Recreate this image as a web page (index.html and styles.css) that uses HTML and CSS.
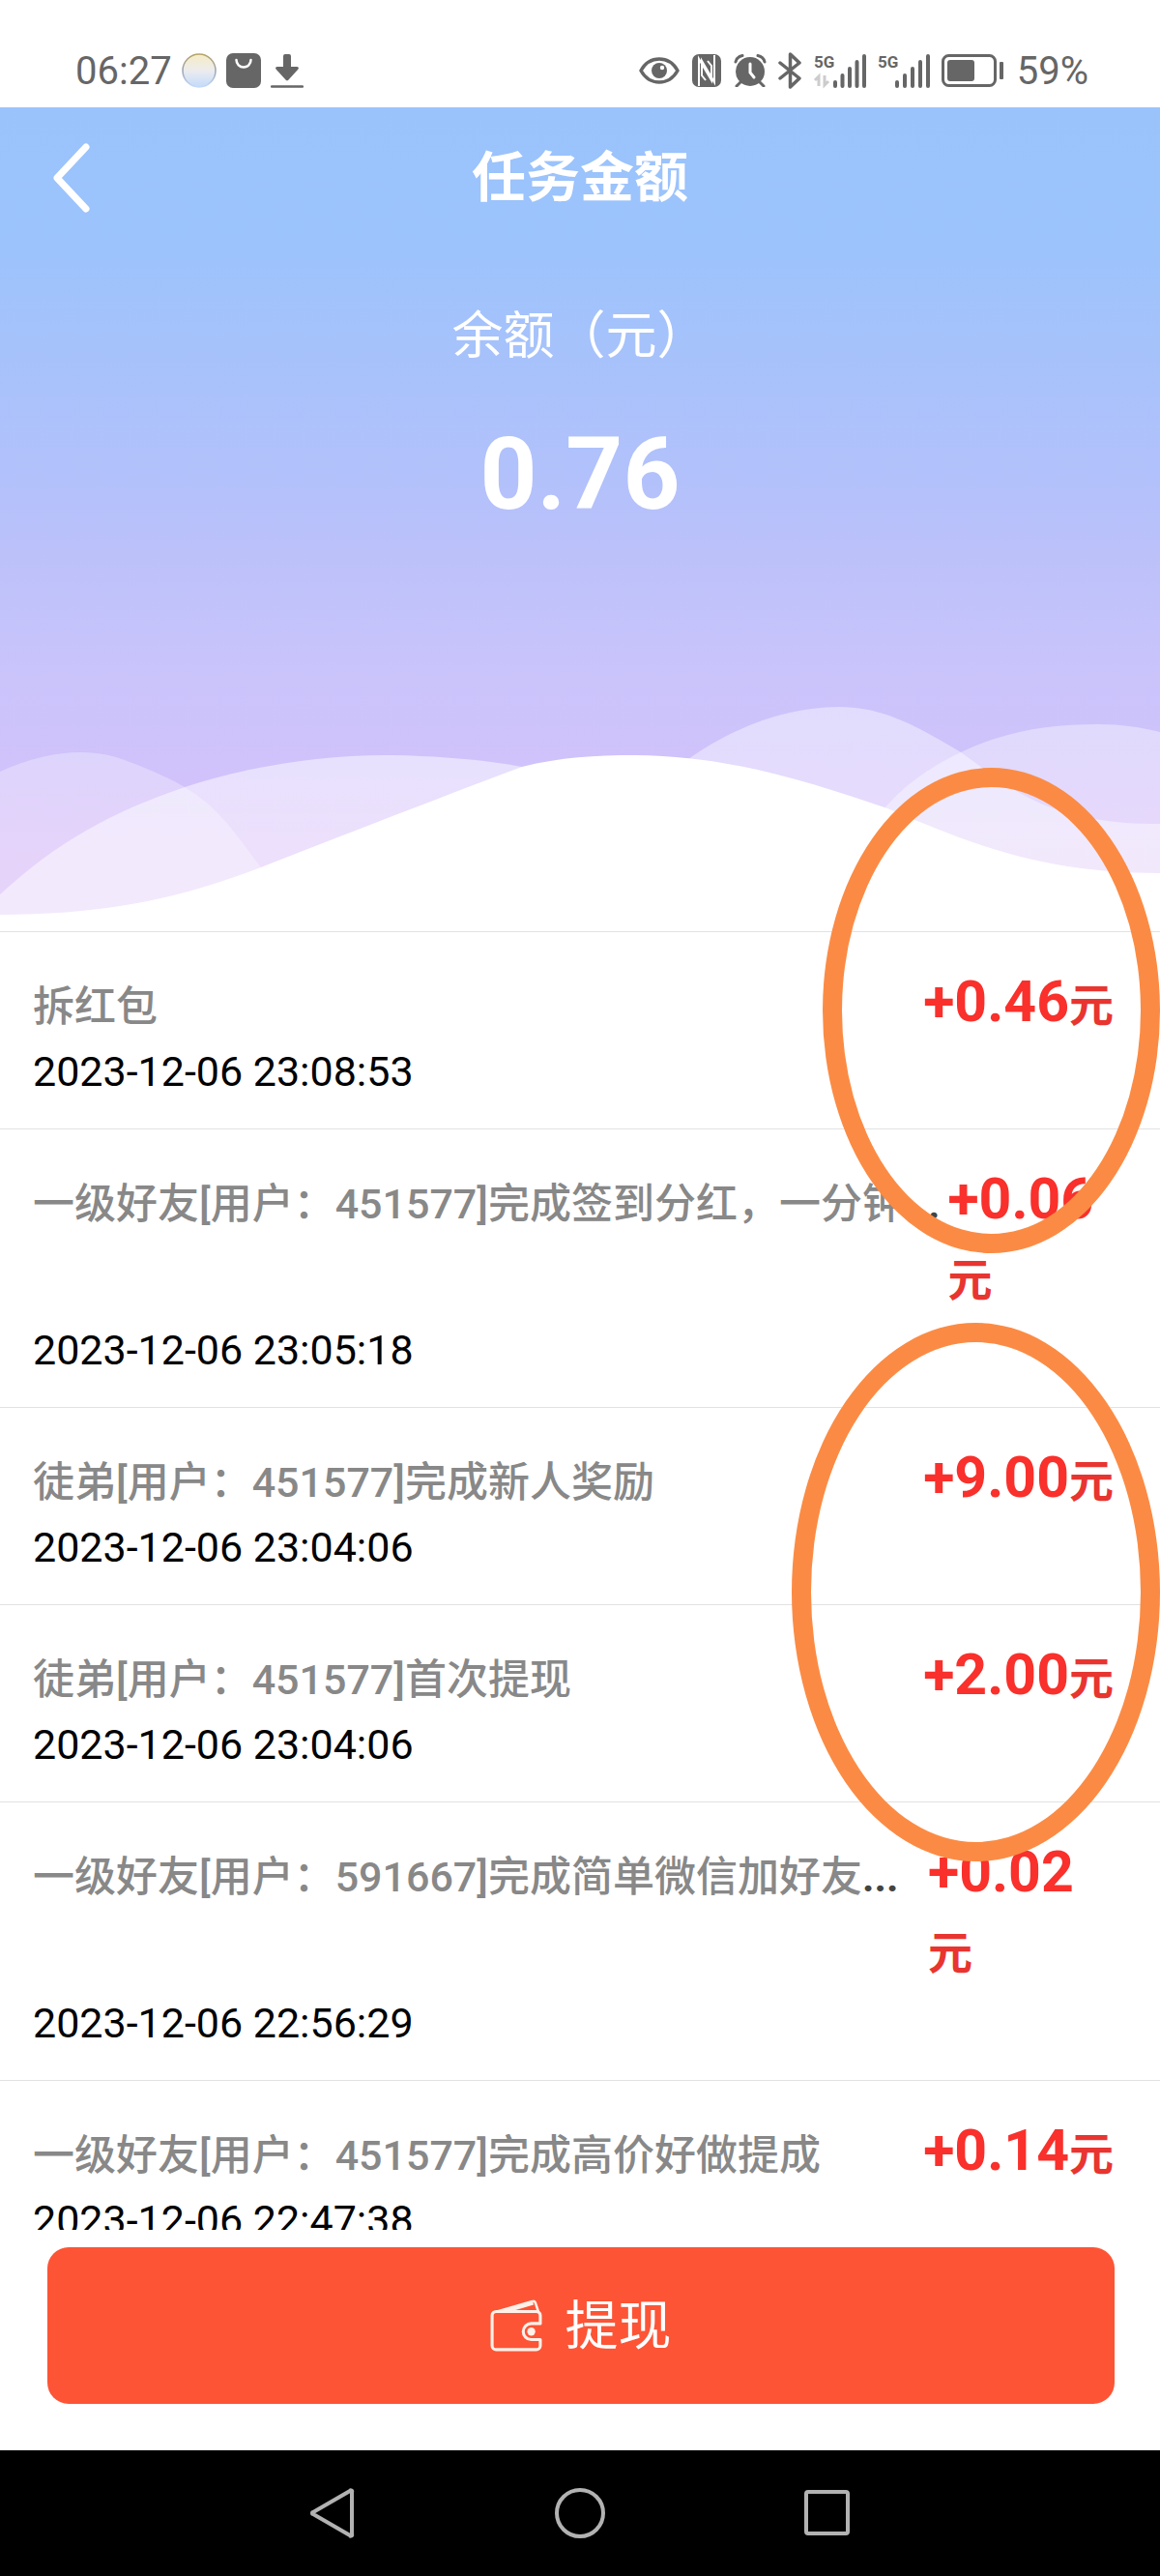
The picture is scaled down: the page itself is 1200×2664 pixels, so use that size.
FILE: index.html
```html
<!DOCTYPE html>
<html lang="zh-CN">
<head>
    <meta charset="UTF-8">
    <meta name="viewport" content="width=device-width, initial-scale=1.0">
    <title>任务金额</title>
    <link rel="stylesheet" href="styles.css">
</head>
<body>

<div class="status-bar">
    <div class="status-left">
        <span class="status-text">06:27</span>
        <svg width="36" height="36" viewBox="0 0 36 36">
            <defs>
                <linearGradient id="ball" x1="0" y1="0" x2="0" y2="1">
                    <stop offset="0" stop-color="#f6ecc4"/>
                    <stop offset="0.5" stop-color="#ececee"/>
                    <stop offset="1" stop-color="#c3dbfb"/>
                </linearGradient>
                <linearGradient id="rim" x1="0" y1="0" x2="0" y2="1">
                    <stop offset="0" stop-color="#b5a566"/>
                    <stop offset="0.5" stop-color="#9aa3b5"/>
                    <stop offset="1" stop-color="#c3dbfb"/>
                </linearGradient>
            </defs>
            <circle cx="18" cy="18" r="17" fill="url(#ball)" stroke="url(#rim)" stroke-width="1.5"/>
        </svg>
        <svg width="36" height="36" viewBox="0 0 36 36">
            <rect width="36" height="36" rx="7" fill="#666"/>
            <path d="M10.5 7a7.5 7.5 0 0 0 15 0" fill="none" stroke="#fff" stroke-width="2.5" stroke-linecap="round"/>
        </svg>
        <svg width="34" height="36" viewBox="0 0 34 36">
            <path d="M13 3a2 2 0 0 1 2-2h4a2 2 0 0 1 2 2v11h6c2 0 2.500 1.500 1.300 2.700L18.500 27.500a2 2 0 0 1-3 0L5.700 16.700C4.500 15.500 5 14 7 14h6z" fill="#666"/>
            <path d="M1 34.500h32" stroke="#666" stroke-width="2.500" stroke-linecap="round"/>
        </svg>
    </div>
    <div class="status-right">
        <svg width="42" height="28" viewBox="0 0 42 28">
            <path d="M2 14C11-2 31-2 40 14C31 30 11 30 2 14z" fill="none" stroke="#666" stroke-width="3.500" stroke-linejoin="round"/>
            <circle cx="21" cy="14" r="8" fill="#666"/>
            <circle cx="24" cy="11" r="2.200" fill="#fff"/>
        </svg>
        <svg width="32" height="34" viewBox="0 0 32 34">
            <rect x="1" y="0" width="30" height="34" rx="7" fill="#666"/>
            <path d="M8 33V5l13 22V12l-4-5" fill="none" stroke="#fff" stroke-width="2"/>
            <path d="M24 1v28L11 7v15l4 5" fill="none" stroke="#fff" stroke-width="2"/>
        </svg>
        <svg width="34" height="34" viewBox="0 0 34 34">
            <circle cx="17" cy="18" r="15" fill="#666"/>
            <path d="M2 8C3 4 6 2 9 1.500M32 8C31 4 28 2 25 1.500M7 29l-4 4M27 29l4 4" fill="none" stroke="#666" stroke-width="3" stroke-linecap="round"/>
            <path d="M17 10v9l4 5" fill="none" stroke="#fff" stroke-width="3" stroke-linecap="round"/>
        </svg>
        <svg width="25" height="38" viewBox="0 0 25 38">
            <path d="M2 11l20 16-9.500 9V2L22 11 2 27" fill="none" stroke="#666" stroke-width="3.500" stroke-linejoin="round" stroke-linecap="round"/>
        </svg>
        <svg class="signal" width="54" height="36" viewBox="0 0 54 36">
            <text x="0" y="15">5G</text>
            <path d="M5 34V24l-4 4M11 23v10l4-4" fill="none" stroke="#ccc" stroke-width="3"/>
            <path d="M22 30v4M29.500 23v11M37 16v18M44.500 9v25M52 3v31" stroke="#666" stroke-width="4" stroke-linecap="round"/>
        </svg>
        <svg class="signal" width="54" height="36" viewBox="0 0 54 36">
            <text x="0" y="15">5G</text>
            <path d="M20 30v4M28 23v11M36 16v18M44 9v25M52 3v31" stroke="#666" stroke-width="4" stroke-linecap="round"/>
        </svg>
        <svg width="66" height="34" viewBox="0 0 66 34">
            <rect x="1.500" y="1.500" width="54" height="31" rx="6" fill="none" stroke="#666" stroke-width="3"/>
            <rect x="6" y="6" width="28" height="22" rx="3" fill="#666"/>
            <rect x="60" y="8" width="4" height="18" rx="1" fill="#666"/>
        </svg>
        <span class="status-text">59%</span>
    </div>
</div>

<main class="content">
    <header class="hero">
        <div class="topbar">
            <button class="back" type="button" aria-label="返回">
                <svg width="40" height="72" viewBox="0 0 40 72">
                    <path d="M35 4L5 36l30 32" fill="none" stroke="#fff" stroke-width="7" stroke-linecap="round" stroke-linejoin="round"/>
                </svg>
            </button>
            <h1>任务金额</h1>
        </div>
        <p class="balance-label">余额（元）</p>
        <p class="balance">0.76</p>
        <svg class="waves" viewBox="0 0 1200 233" preserveAspectRatio="none">
            <path d="M0 68C50 45 98 42 134 58C158 67 178 76 191 84C230 108 245 135 270 167L290 233H0z" fill="#fff" fill-opacity="0.3"/>
            <path d="M0 195C60 140 115 110 191 84C260 61 340 50 406 51C460 52 500 56 540 63L560 233H0z" fill="#fff" fill-opacity="0.5"/>
            <path d="M700 64C750 25 810 1 868 1C915 1 950 22 994 48C1050 88 1085 122 1200 122V233H700z" fill="#fff" fill-opacity="0.42"/>
            <path d="M905 118C930 85 960 64 994 48C1040 26 1085 19 1136 19C1160 19 1180 22 1200 27V233H905z" fill="#fff" fill-opacity="0.38"/>
            <path d="M0 216C100 216 180 202 270 167C370 128 450 97 540 63C580 53 615 51 657 51C760 52 840 80 918 106C1010 145 1080 173 1200 173V233H0z" fill="#fff"/>
        </svg>
    </header>

    <ul class="records">
        <li class="record">
            <div class="record-top">
                <span class="desc">拆红包</span>
                <span class="amount">+0.46<small>元</small></span>
            </div>
            <time>2023-12-06 23:08:53</time>
        </li>
        <li class="record">
            <div class="record-top">
                <span class="desc">一级好友[用户：451577]完成签到分红，一分钟<b>...</b></span>
                <span class="amount amount-wrap">+0.06<small>元</small></span>
            </div>
            <time>2023-12-06 23:05:18</time>
        </li>
        <li class="record">
            <div class="record-top">
                <span class="desc">徒弟[用户：451577]完成新人奖励</span>
                <span class="amount">+9.00<small>元</small></span>
            </div>
            <time>2023-12-06 23:04:06</time>
        </li>
        <li class="record">
            <div class="record-top">
                <span class="desc">徒弟[用户：451577]首次提现</span>
                <span class="amount">+2.00<small>元</small></span>
            </div>
            <time>2023-12-06 23:04:06</time>
        </li>
        <li class="record">
            <div class="record-top">
                <span class="desc">一级好友[用户：591667]完成简单微信加好友<b>...</b></span>
                <span class="amount amount-wrap">+0.02<small>元</small></span>
            </div>
            <time>2023-12-06 22:56:29</time>
        </li>
        <li class="record">
            <div class="record-top">
                <span class="desc">一级好友[用户：451577]完成高价好做提成</span>
                <span class="amount">+0.14<small>元</small></span>
            </div>
            <time>2023-12-06 22:47:38</time>
        </li>
    </ul>

    <!-- hand marked circles over the amounts -->
    <div class="ring ring-first"></div>
    <div class="ring ring-second"></div>
</main>

<div class="action-bar">
    <button class="withdraw" type="button">
        <svg width="54" height="54" viewBox="0 0 52 52" fill="none" stroke="#fff0e8" stroke-width="3" stroke-linejoin="round">
            <path d="M50 24V16a4 4 0 0 0-4-4H6a4 4 0 0 0-4 4v30a4 4 0 0 0 4 4h40a4 4 0 0 0 4-4v-6H41a8 8 0 0 1 0-16z"/>
            <path d="M7 12L42 2q2-1 3 1l3 9M16 12l27-8" stroke-width="2.500"/>
            <circle cx="41" cy="32" r="4" fill="#fff0e8" stroke="none"/>
        </svg>
        <span>提现</span>
    </button>
</div>

<nav class="system-nav">
    <button type="button" aria-label="后退">
        <svg width="52" height="52" viewBox="0 0 52 52">
            <path d="M46 4v44a1 1 0 0 1-2 1L6 27a1 1 0 0 1 0-2L44 3a1 1 0 0 1 2 1z"/>
        </svg>
    </button>
    <button type="button" aria-label="主页">
        <svg width="52" height="52" viewBox="0 0 52 52">
            <circle cx="26" cy="26" r="24"/>
        </svg>
    </button>
    <button type="button" aria-label="最近任务">
        <svg width="52" height="52" viewBox="0 0 52 52">
            <rect x="4" y="4" width="43" height="43" rx="2"/>
        </svg>
    </button>
</nav>

</body>
</html>
```

FILE: styles.css
```css
* {
    margin: 0;
    padding: 0;
    box-sizing: border-box;
}

body {
    display: flex;
    flex-direction: column;
    height: 100vh;
    overflow: hidden;
    font-family: Roboto, "Noto Sans CJK SC", sans-serif;
    background-color: #fff;
}

button {
    border: 0;
    background: none;
    font-family: inherit;
    cursor: pointer;
}

svg {
    display: block;
    flex: none;
}

/* phone status bar */
.status-bar {
    display: flex;
    justify-content: space-between;
    flex: none;
    height: 111px;
    padding: 36px 74px 0 78px;
}

.status-left,
.status-right {
    display: flex;
    align-items: center;
    height: 76px;
    padding-bottom: 2px;
}

.status-left {
    gap: 10px;
}

.status-right {
    gap: 12px;
}

.status-text {
    font-size: 40px;
    color: #666;
}

.signal {
    overflow: visible;
}

.signal text {
    font-size: 17px;
    font-weight: bold;
    fill: #666;
}

/* scrolling area */
.content {
    position: relative;
    flex: 1;
    min-height: 0;
    overflow: hidden;
}

.hero {
    display: flex;
    flex-direction: column;
    height: 852px;
    padding-top: 3px;
    color: #fff;
    text-align: center;
    background: linear-gradient(#9ac3fc 0, #9cc3fc 140px, #a6c2fb 250px, #b3c1fb 390px, #bcc1fa 460px, #cac4fb 590px, #d1c2fb 690px, #dcc0f8 790px);
}

.topbar {
    display: grid;
    grid-template-columns: 100px 1fr 100px;
    align-items: center;
    height: 140px;
}

.back {
    justify-self: end;
    padding-right: 6px;
}

.topbar h1 {
    font-size: 56px;
    line-height: 80px;
}

.balance-label {
    margin-top: 64px;
    font-size: 53px;
    line-height: 60px;
}

.balance {
    margin-top: 53px;
    font-size: 103px;
    font-weight: bold;
    line-height: 120px;
}

.waves {
    width: 100%;
    height: 233px;
    margin-top: auto;
}

.records {
    list-style: none;
}

.record {
    padding: 30px 48px 29px 34px;
    border-top: 1px solid #e2e2e2;
}

.record-top {
    display: flex;
    align-items: baseline;
    justify-content: space-between;
    gap: 8px;
}

.desc {
    flex: none;
    font-size: 43px;
    font-weight: 500;
    line-height: 60px;
    color: #888;
    white-space: nowrap;
}

.desc b {
    color: #444;
}

.amount {
    font-size: 59px;
    font-weight: bold;
    line-height: 84px;
    color: #f9302b;
    white-space: nowrap;
}

.amount small {
    font-size: 46px;
    line-height: 60px;
    color: #e83530;
}

.amount-wrap {
    width: 192px;
}

.amount-wrap small {
    display: block;
    line-height: 84px;
}

.record time {
    display: block;
    font-size: 43px;
    line-height: 60px;
    color: #000;
}

.ring {
    position: absolute;
    right: 0;
    border: 20px solid #fb8b44;
    border-radius: 50%;
    pointer-events: none;
}

.ring-first {
    top: 683px;
    width: 349px;
    height: 502px;
}

.ring-second {
    top: 1257px;
    width: 381px;
    height: 557px;
}

/* bottom button */
.action-bar {
    flex: none;
    padding: 18px 47px 48px 49px;
    background-color: #fff;
}

.withdraw {
    display: flex;
    align-items: center;
    justify-content: center;
    gap: 23px;
    width: 100%;
    height: 162px;
    border-radius: 22px;
    background-color: #fd5436;
    color: #fff;
    font-size: 55px;
    line-height: 80px;
}

.system-nav {
    display: grid;
    grid-template-columns: repeat(3, 1fr);
    align-items: center;
    justify-items: center;
    flex: none;
    height: 130px;
    padding: 0 18%;
    background-color: #000;
}

.system-nav svg {
    fill: none;
    stroke: #b2b2b2;
    stroke-width: 4;
}
```
